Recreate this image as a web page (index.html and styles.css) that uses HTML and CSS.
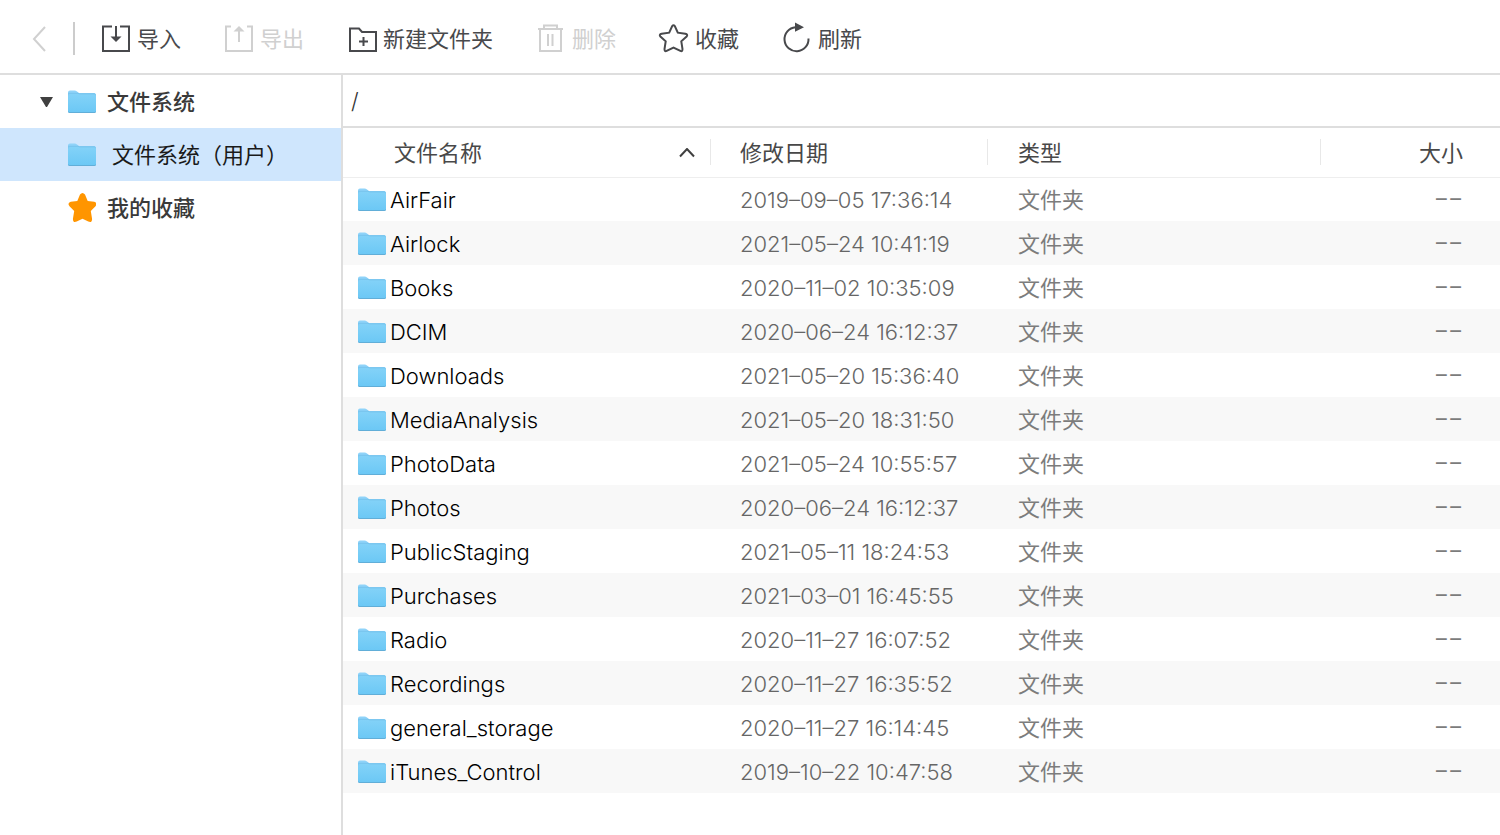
FILE: index.html
```html
<!DOCTYPE html>
<html lang="zh-CN">
<head>
  <meta charset="UTF-8">
  <title>文件系统</title>
  <link rel="stylesheet" href="styles.css">
</head>
<body>
<svg class="defs" aria-hidden="true">
  <defs>
    <linearGradient id="folderFill" x1="0" y1="0" x2="0" y2="1">
      <stop offset="0" stop-color="#83d2f8"/>
      <stop offset="1" stop-color="#6cc8f5"/>
    </linearGradient>
    <symbol id="folder" viewBox="0 0 28 24">
      <path d="M0 2.5Q0 0.500 2 0.500H6.500Q8 0.500 9 1.500L11 3H26Q28 3 28 5V21H0Z" fill="#8fd3f9"/>
      <path d="M0 5.500Q0 4 1.500 4H26.500Q28 4 28 5.500V21.500Q28 23 26.500 23H1.500Q0 23 0 21.500Z" fill="#61aed8"/>
      <path d="M0 5.500Q0 4 1.500 4H26.500Q28 4 28 5.500V20.500Q28 22 26.500 22H1.500Q0 22 0 20.500Z" fill="url(#folderFill)"/>
      <path d="M0 3.300H10L11.500 3.800H27" fill="none" stroke="#6fbfe8" stroke-width="0.800"/>
    </symbol>
  </defs>
</svg>

<div class="app">
  <div class="toolbar">
    <button class="back" disabled aria-label="返回">
      <svg width="14" height="26" viewBox="0 0 14 26"><path d="M13 1L2 13L13 25"/></svg>
    </button>
    <span class="line"></span>
    <button>
      <svg width="28" height="28" viewBox="0 0 28 28"><path d="M10 1.500H1V26H27V1.500H18M14 1V14"/><path class="solid" d="M8.500 11.500L14 17L19.500 11.500Z"/></svg>
      <span>导入</span>
    </button>
    <button disabled>
      <svg width="28" height="28" viewBox="0 0 28 28"><path d="M6 1.500H1V26H27V1.500H22M14 5V17"/><path class="solid" d="M8.500 6.500L14 1L19.500 6.500Z"/></svg>
      <span>导出</span>
    </button>
    <button>
      <svg width="28" height="28" viewBox="0 0 28 28"><path d="M2 3.500H11L14 7H28V26H2ZM15.500 12V21M11 16.500H20"/></svg>
      <span>新建文件夹</span>
    </button>
    <button disabled>
      <svg width="28" height="28" viewBox="0 0 28 28"><path d="M1 4H26M3 4V26H24V4M7 4V0.500H20V4M11 9V21M15.500 9V21"/></svg>
      <span>删除</span>
    </button>
    <button>
      <svg width="28" height="28" viewBox="0 0 28 28"><path d="M12.200 1.100Q13.500 -0.500 14.800 1.100L17.800 7.700L25.300 8.800Q28.300 9.500 26.600 11.500L21.300 16.300L22.500 24.100Q22.500 26.900 20.400 25.900L13.500 22.500L6.600 25.900Q4.500 26.900 4.500 24.100L5.700 16.300L0.400 11.500Q-1.300 9.500 1.700 8.800L9.200 7.700Z"/></svg>
      <span>收藏</span>
    </button>
    <button>
      <svg width="28" height="28" viewBox="0 0 28 28"><path d="M12.500 2.200A12 12 0 1 0 25.500 13.500"/><path class="solid" d="M12 -2.500L21 2.300L12 6.700Z"/></svg>
      <span>刷新</span>
    </button>
  </div>

  <div class="content">
    <div class="side">
      <a class="item root" href="#">
        <span class="arrow"></span>
        <svg width="28" height="24"><use href="#folder"/></svg>
        <span>文件系统</span>
      </a>
      <a class="item child active" href="#">
        <span class="arrow none"></span>
        <svg width="28" height="24"><use href="#folder"/></svg>
        <span>文件系统（用户）</span>
      </a>
      <a class="item root" href="#">
        <span class="arrow none"></span>
        <svg width="28" height="30" viewBox="0 0 28 30"><path class="fav" d="M12 1.500Q14.500 -1.500 17 1.500L19.700 8L26.300 8.800Q30 10 27.500 13.300L22.800 18L24.100 26Q24 30.300 20.300 28.600L14.500 25.800L8.700 28.600Q5 30.300 4.900 26L6.200 18L1.500 13.300Q-1 10 2.700 8.800L9.300 8Z"/></svg>
        <span>我的收藏</span>
      </a>
    </div>

    <div class="main">
      <input class="path" type="text" value="/" aria-label="路径">
      <table class="list">
        <thead>
          <tr>
            <th class="name"><div class="sort"><span>文件名称</span><svg width="16" height="10" viewBox="0 0 16 10"><path d="M1 8.500L8 1L15 8.500"/></svg></div></th>
            <th class="date">修改日期</th>
            <th class="type">类型</th>
            <th class="size">大小</th>
          </tr>
        </thead>
        <tbody id="list"></tbody>
      </table>
    </div>
  </div>
</div>

<script>
let listBox = document.getElementById('list');
let files = [
  ['AirFair', '2019–09–05 17:36:14'],
  ['Airlock', '2021–05–24 10:41:19'],
  ['Books', '2020–11–02 10:35:09'],
  ['DCIM', '2020–06–24 16:12:37'],
  ['Downloads', '2021–05–20 15:36:40'],
  ['MediaAnalysis', '2021–05–20 18:31:50'],
  ['PhotoData', '2021–05–24 10:55:57'],
  ['Photos', '2020–06–24 16:12:37'],
  ['PublicStaging', '2021–05–11 18:24:53'],
  ['Purchases', '2021–03–01 16:45:55'],
  ['Radio', '2020–11–27 16:07:52'],
  ['Recordings', '2020–11–27 16:35:52'],
  ['general_storage', '2020–11–27 16:14:45'],
  ['iTunes_Control', '2019–10–22 10:47:58']
];

// 拼接每一行
listBox.innerHTML = files.map(([name, date]) => `
  <tr>
    <td class="name"><div class="file"><svg width="28" height="24"><use href="#folder"/></svg><span>${name}</span></div></td>
    <td class="date">${date}</td>
    <td class="type">文件夹</td>
    <td class="size">––</td>
  </tr>`).join('');
</script>
</body>
</html>
```
FILE: styles.css
```css
* {
  margin: 0;
  padding: 0;
  box-sizing: border-box;
}
body {
  background: #fff;
  color: #333;
  font: 22px/32px Inter, "Noto Sans CJK SC", sans-serif;
}
.defs {
  position: absolute;
  width: 0;
  height: 0;
}
.app {
  display: flex;
  flex-direction: column;
  min-height: 100vh;
}

/* 工具栏 */
.toolbar {
  display: flex;
  align-items: center;
  gap: 44px;
  height: 75px;
  padding: 4px 32px 0;
  border-bottom: 2px solid #dedede;
}
.toolbar button {
  display: flex;
  align-items: center;
  gap: 7px;
  border: 0;
  background: none;
  color: #48494c;
  font: inherit;
  white-space: nowrap;
}
.toolbar button:disabled {
  color: #d0d0d0;
}
.toolbar svg {
  fill: none;
  stroke: currentColor;
  stroke-width: 2;
  overflow: visible;
}
.toolbar .solid {
  fill: currentColor;
  stroke: none;
}
.toolbar .line {
  width: 2px;
  height: 33px;
  margin: 0 -17px;
  background: #ccc;
}

.content {
  display: flex;
  flex: 1;
}

/* 左侧目录 */
.side {
  flex: none;
  width: 343px;
  border-right: 2px solid #dedede;
}
.item {
  display: flex;
  align-items: center;
  height: 53px;
  padding-left: 40px;
  color: #3a3a3a;
  text-decoration: none;
}
.item svg {
  margin-right: 11px;
}
.root {
  font-weight: 500;
}
.child svg {
  margin-right: 16px;
}
.active {
  background: #cfe6fd;
  color: #1a1a1a;
}
.arrow {
  width: 13px;
  margin-right: 15px;
  border: 6px solid transparent;
  border-top: 10px solid #404040;
  border-bottom: 0;
}
.arrow.none {
  visibility: hidden;
}
.fav {
  fill: #ff9500;
}

/* 文件列表 */
.main {
  flex: 1;
  min-width: 0;
}
.path {
  display: block;
  width: 100%;
  height: 53px;
  padding: 0 8px;
  border: 0;
  border-bottom: 2px solid #dedede;
  outline: 0;
  color: #333;
  font: inherit;
  font-weight: 300;
}
.list {
  width: 100%;
  border-collapse: collapse;
  table-layout: fixed;
}
th,
td {
  padding-top: 2px;
}
th {
  height: 49px;
  border-bottom: 1px solid #eee;
  background: linear-gradient(#e8e8e8, #e8e8e8) right center / 1px 26px no-repeat;
  color: #484848;
  font-weight: 400;
  text-align: left;
}
td {
  height: 44px;
  color: #7c7c7c;
}
tbody tr:nth-child(even) {
  background: #f8f8f8;
}
th.name {
  width: 368px;
  padding-left: 51px;
  padding-right: 16px;
}
td.name {
  padding-left: 15px;
  color: #000;
  font-weight: 300;
}
.date {
  width: 277px;
  padding-left: 29px;
}
td.date {
  font-weight: 300;
  color: #666;
}
.type {
  padding-left: 30px;
}
.size {
  width: 179px;
  padding-right: 37px;
  text-align: right;
}
th.size {
  background: none;
}
td.size {
  font-family: Roboto, sans-serif;
}
.sort {
  display: flex;
  align-items: center;
  justify-content: space-between;
}
.sort svg {
  fill: none;
  stroke: #404040;
  stroke-width: 2;
}
.file {
  display: flex;
  align-items: center;
  gap: 4px;
}
```
